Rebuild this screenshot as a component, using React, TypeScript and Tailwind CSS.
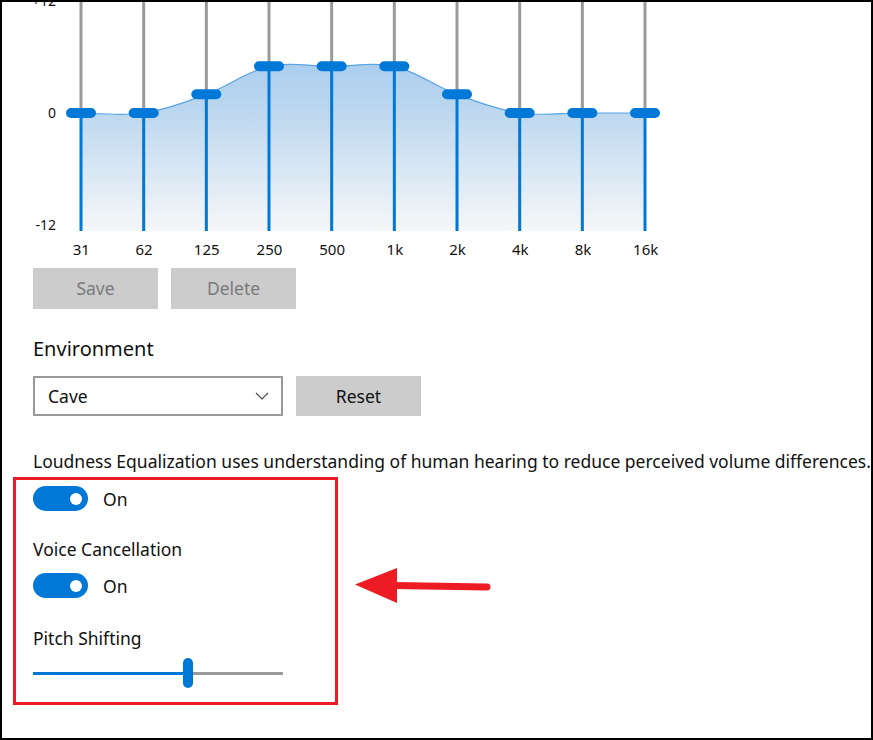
import React from "react";

const BANDS = ["31", "62", "125", "250", "500", "1k", "2k", "4k", "8k", "16k"];
const GAINS = [0, 0, 2, 5, 5, 5, 2, 0, 0, 0];
const STEP = 62.667;
const X0 = 25;
const H = 241;
const dbToY = (db: number) => 123 - db * 9.333;

function curvePath(pts: [number, number][]) {
  let d = `M ${pts[0][0]} ${pts[0][1]}`;
  for (let i = 0; i < pts.length - 1; i++) {
    const p0 = pts[i - 1] || pts[i];
    const p1 = pts[i];
    const p2 = pts[i + 1];
    const p3 = pts[i + 2] || p2;
    const c1x = p1[0] + (p2[0] - p0[0]) / 6;
    const c1y = p1[1] + (p2[1] - p0[1]) / 6;
    const c2x = p2[0] - (p3[0] - p1[0]) / 6;
    const c2y = p2[1] - (p3[1] - p1[1]) / 6;
    d += ` C ${c1x} ${c1y} ${c2x} ${c2y} ${p2[0]} ${p2[1]}`;
  }
  return d;
}

function EqChart() {
  const pts: [number, number][] = GAINS.map((g, i) => [X0 + i * STEP, dbToY(g)]);
  const line = curvePath(pts);
  const last = pts[pts.length - 1];
  const fill = `${line} L ${last[0]} ${H} L ${pts[0][0]} ${H} Z`;
  return (
    <svg width={630} height={H} viewBox={`0 0 630 ${H}`} className="block">
      <defs>
        <linearGradient id="eqfill" gradientUnits="userSpaceOnUse" x1="0" y1="70" x2="0" y2={H}>
          <stop offset="0" stopColor="#a9cdef" />
          <stop offset="0.3" stopColor="#bcd7ef" />
          <stop offset="1" stopColor="#f6f7f8" />
        </linearGradient>
      </defs>
      <path d={fill} fill="url(#eqfill)" />
      <path d={line} fill="none" stroke="#5aa3e2" strokeWidth={1.2} />
      {pts.map(([x, y], i) => (
        <g key={i}>
          <rect x={x - 1.5} y={0} width={3} height={y} fill="#9a9a9a" />
          <rect x={x - 1.5} y={y} width={3} height={H - y} fill="#0078d7" />
          <rect x={x - 15} y={y - 5} width={30} height={10} rx={5} fill="#0078d7" />
        </g>
      ))}
    </svg>
  );
}

function Toggle() {
  return (
    <div className="flex items-center gap-[15px]">
      <div className="w-[55px] h-[25px] rounded-full bg-[#0078d7] flex items-center justify-end pr-[6px]">
        <div className="w-[12px] h-[12px] rounded-full bg-white" />
      </div>
      <span className="text-[17.5px] leading-[24px]">On</span>
    </div>
  );
}

export default function App() {
  return (
    <div className="w-[873px] h-[740px] border-2 border-black bg-white overflow-hidden font-['Noto_Sans',sans-serif] text-[#111]">
      {/* Equalizer */}
      <div className="mt-[-12px] flex">
        <div className="w-[54px] h-[246px] flex flex-col justify-between items-end text-[14px] leading-[22px]">
          <span>+12</span>
          <span>0</span>
          <span>-12</span>
        </div>
        <EqChart />
      </div>
      <div className="ml-[48px] mt-[3px] w-[627px] grid grid-cols-10 text-[15px] leading-[20px]">
        {BANDS.map((b) => (
          <span key={b} className="text-center">
            {b}
          </span>
        ))}
      </div>

      <div className="pl-[31px]">
        <div className="mt-[9px] flex gap-[13px]">
          <div className="w-[125px] h-[41px] bg-[#cccccc] text-[#7a7a7a] text-[17.5px] flex items-center justify-center">
            Save
          </div>
          <div className="w-[125px] h-[41px] bg-[#cccccc] text-[#7a7a7a] text-[17.5px] flex items-center justify-center">
            Delete
          </div>
        </div>

        <div className="mt-[26px] text-[20px] leading-[28px]">Environment</div>

        <div className="mt-[13px] flex gap-[13px]">
          <div className="w-[250px] h-[40px] border-2 border-[#999999] bg-white flex items-center justify-between pl-[13px] pr-[12px]">
            <span className="text-[17.5px]">Cave</span>
            <svg width="14" height="8" viewBox="0 0 14 8">
              <polyline points="1,1 7,7 13,1" fill="none" stroke="#444" strokeWidth="1.1" />
            </svg>
          </div>
          <div className="w-[125px] h-[40px] bg-[#cccccc] text-[17.5px] flex items-center justify-center">Reset</div>
        </div>

        <div className="mt-[33px] text-[17.5px] leading-[24px] whitespace-nowrap">
          Loudness Equalization uses understanding of human hearing to reduce perceived volume differences.
        </div>
      </div>

      <div className="mt-[4px] ml-[11px] flex items-start">
        <div className="w-[325px] border-[3px] border-[#ed1c24] pl-[17px] pt-[6px] pb-[14px]">
          <Toggle />
          <div className="mt-[26px] text-[17.5px] leading-[24px]">Voice Cancellation</div>
          <div className="mt-[12px]">
            <Toggle />
          </div>
          <div className="mt-[28px] text-[17.5px] leading-[24px]">Pitch Shifting</div>
          <div className="mt-[8px] w-[250px] h-[30px] flex items-center">
            <div className="w-[150px] h-[3px] bg-[#0078d7]" />
            <div className="w-[10px] h-[30px] rounded-full bg-[#0078d7]" />
            <div className="flex-1 h-[3px] bg-[#999999]" />
          </div>
        </div>
        <svg width="145" height="50" viewBox="0 0 145 50" className="ml-[12px] mt-[83px]">
          <line x1="44" y1="25.5" x2="137" y2="27" stroke="#ed1c24" strokeWidth="7" strokeLinecap="round" />
          <polygon points="5,24.5 47,8 47,43" fill="#ed1c24" />
        </svg>
      </div>
    </div>
  );
}
